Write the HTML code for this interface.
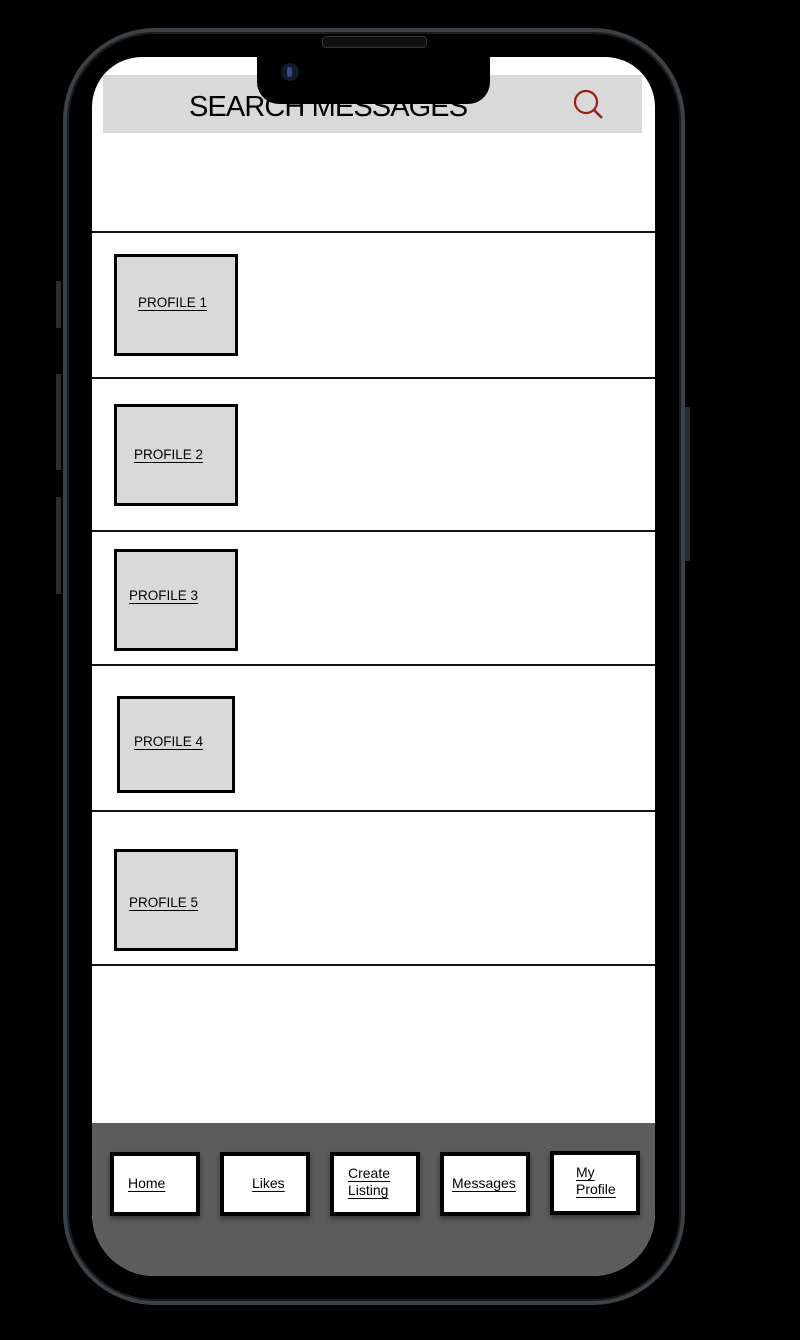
<!DOCTYPE html>
<html><head><style>
body{margin:0;width:800px;height:1340px;background:#000;position:relative;overflow:hidden;font-family:"Liberation Sans",sans-serif}
.a{position:absolute}
.frame{left:63px;top:28px;width:614px;height:1269px;border:4px solid #3c4145;border-radius:92px;box-shadow:inset 0 0 0 2px #1a1c1e}
.screen{left:92px;top:57px;width:563px;height:1219px;background:#fff;border-radius:50px 50px 62px 62px;overflow:hidden}
.line{left:0;width:563px;height:1.5px;background:#111}
.box{left:22px;width:118px;height:96px;border:3px solid #000;background:#d9d9d9;font-size:13.5px;color:#000}
.box span{position:absolute;top:38px;text-decoration:underline;text-underline-offset:3px}
.btn{top:1095px;width:82px;height:56px;border:4px solid #000;background:#fff;font-size:14px;box-shadow:0 3px 5px rgba(0,0,0,.4)}
.btn span{position:absolute;text-decoration:underline;text-underline-offset:3px;line-height:17px}
.side{background:#2a2e31;width:5px}
</style></head><body>
<div class="a side" style="left:56px;top:281px;height:47px"></div>
<div class="a side" style="left:56px;top:374px;height:96px"></div>
<div class="a side" style="left:56px;top:497px;height:97px"></div>
<div class="a side" style="left:685px;top:407px;height:154px"></div>
<div class="a frame"></div>
<div class="a screen">
 <div class="a" style="left:11px;top:18px;width:539px;height:58px;background:#d9d9d9"></div>
 <div class="a" style="left:97px;top:34px;font-size:29px;letter-spacing:-0.9px">SEARCH MESSAGES</div>
 <svg class="a" style="left:480px;top:30px" width="34" height="34" viewBox="0 0 34 34"><circle cx="14" cy="15" r="11" fill="none" stroke="#9b1c10" stroke-width="2.2"/><line x1="22" y1="23" x2="30" y2="31" stroke="#9b1c10" stroke-width="2.4"/></svg>
 <div class="a line" style="top:174px"></div>
 <div class="a line" style="top:320px"></div>
 <div class="a line" style="top:473px"></div>
 <div class="a line" style="top:607px"></div>
 <div class="a line" style="top:753px"></div>
 <div class="a line" style="top:907px"></div>
 <div class="a box" style="top:197px"><span style="left:21px">PROFILE 1</span></div>
 <div class="a box" style="top:347px"><span style="left:17px;top:40px">PROFILE 2</span></div>
 <div class="a box" style="top:492px"><span style="left:12px;top:36px">PROFILE 3</span></div>
 <div class="a box" style="left:25px;top:639px;width:112px;height:91px"><span style="left:14px;top:35px">PROFILE 4</span></div>
 <div class="a box" style="top:792px"><span style="left:12px;top:43px">PROFILE 5</span></div>
 <div class="a" style="left:0;top:1066px;width:563px;height:153px;background:#5c5c5c"></div>
 <div class="a btn" style="left:18px"><span style="left:14px;top:19px">Home</span></div>
 <div class="a btn" style="left:128px"><span style="left:28px;top:19px">Likes</span></div>
 <div class="a btn" style="left:238px"><span style="left:14px;top:9px">Create<br>Listing</span></div>
 <div class="a btn" style="left:348px"><span style="left:8px;top:19px">Messages</span></div>
 <div class="a btn" style="left:458px;top:1094px"><span style="left:22px;top:9px">My<br>Profile</span></div>
</div>
<div class="a" style="left:257px;top:50px;width:233px;height:54px;background:#000;border-radius:0 0 22px 22px"></div>
<div class="a" style="left:281px;top:63px;width:18px;height:18px;border-radius:50%;background:#111a2e"></div>
<div class="a" style="left:287px;top:67px;width:5px;height:10px;border-radius:3px;background:#3a4a8a"></div>
<div class="a" style="left:322px;top:36px;width:103px;height:10px;border-radius:4px;background:#111;border:1px solid #333"></div>
</body></html>
